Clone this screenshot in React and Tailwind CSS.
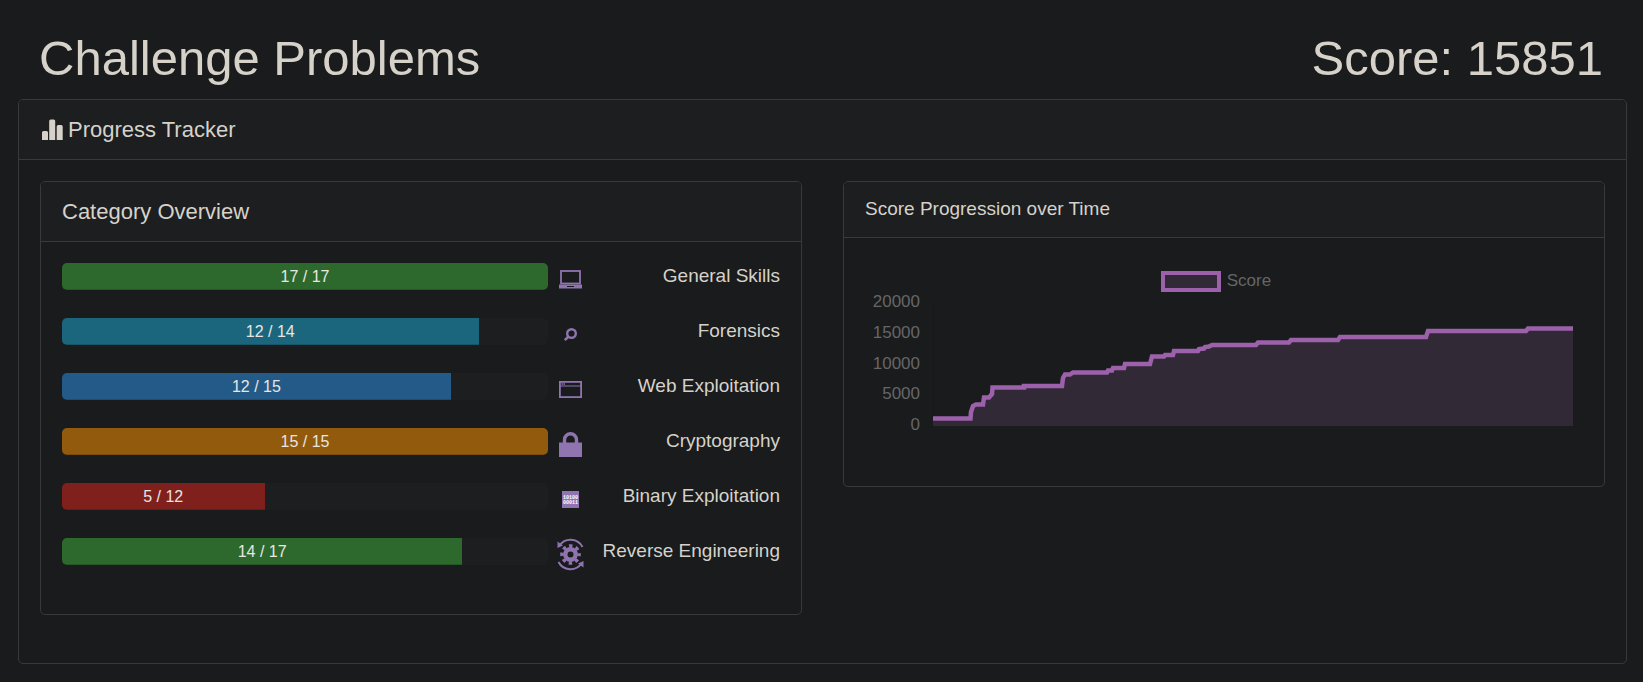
const PURPLE = '#8f74b0';

const icons = {
  laptop: (
    <svg width="23" height="20" viewBox="0 0 23 20" aria-hidden="true">
      <rect x="2" y="1" width="19" height="12.500" fill="none" stroke={PURPLE} strokeWidth="1.8" />
      <path d="M0 14.500h23v4H0z" fill={PURPLE} />
      <path d="M8 16.500h7" stroke="#181a1b" />
    </svg>
  ),
  search: (
    <svg width="13" height="14" viewBox="0 0 13 14" aria-hidden="true">
      <circle cx="7.5" cy="5.5" r="4.3" fill="none" stroke={PURPLE} strokeWidth="2.4" />
      <path d="M4.500 8.500L.8 12.200" stroke={PURPLE} strokeWidth="2.6" />
    </svg>
  ),
  browser: (
    <svg width="23" height="18" viewBox="0 0 23 18" aria-hidden="true">
      <rect x=".9" y=".9" width="21.2" height="15.2" fill="none" stroke={PURPLE} strokeWidth="1.8" />
      <path d="M1 5h21" stroke={PURPLE} />
      <path d="M2.500 3h3.500" stroke={PURPLE} strokeWidth="1.500" strokeDasharray="1.500 .5" />
    </svg>
  ),
  lock: (
    <svg width="23" height="25" viewBox="0 0 23 25" aria-hidden="true">
      <path d="M0 10.500h23V25H0z" fill={PURPLE} />
      <path d="M5.500 12V7.700a6 6 0 0 1 12 0V12" fill="none" stroke={PURPLE} strokeWidth="3.400" />
    </svg>
  ),
  binary: (
    <svg width="17" height="17" viewBox="0 0 17 17" aria-hidden="true">
      <path d="M0 0h17v17H0z" fill={PURPLE} />
      <g fill="#fff" fontFamily="Liberation Mono, monospace" fontWeight="700" fontSize="5">
        <text x="1" y="7.5">10100</text>
        <text x="1" y="13">00011</text>
      </g>
    </svg>
  ),
  gear: (
    <svg width="27" height="33" viewBox="0 0 27 33" aria-hidden="true">
      <g stroke={PURPLE} fill="none">
        <circle cx="13.5" cy="16.5" r="5.2" strokeWidth="4.4" />
        <circle cx="13.5" cy="16.5" r="8.6" strokeWidth="3.4" strokeDasharray="3.4 3.354" strokeDashoffset="1.7" />
        <path d="M2.500 7.500a13.500 13.500 0 0 1 23 1.500" strokeWidth="2" />
        <path d="M24.500 25.500a13.500 13.500 0 0 1-23-1.500" strokeWidth="2" />
      </g>
      <path d="M.5 3.500V10l5.500-2.500zM26.500 29.500V23L21 25.500z" fill={PURPLE} />
    </svg>
  ),
};

const categories = [
  { name: 'General Skills', done: 17, total: 17, color: 'bg-[#2d692d]', icon: icons.laptop },
  { name: 'Forensics', done: 12, total: 14, color: 'bg-[#1b667c]', icon: icons.search },
  { name: 'Web Exploitation', done: 12, total: 15, color: 'bg-[#245a87]', icon: icons.browser },
  { name: 'Cryptography', done: 15, total: 15, color: 'bg-[#915a0d]', icon: icons.lock },
  { name: 'Binary Exploitation', done: 5, total: 12, color: 'bg-[#80201d]', icon: icons.binary },
  { name: 'Reverse Engineering', done: 14, total: 17, color: 'bg-[#2d692d]', icon: icons.gear },
];

const LINE =
  'M0 116.500H37.500L38 110L40 104L43 102.500H50L51 95.500H56L59 92L59.500 85.500H91V84H129L130 76L132 72.500H137L140 70.500H174L175 68.500H179L180 66H191L192 62H217L219 54.500H231L232 53H240L241 49H265L266 47L271 46.500L272 45L276 44.500L279 43H323L325 40.500H356L358 38H405L407 35H493L495 29H593L595 26.500H640';

function Category({ name, done, total, color, icon }) {
  return (
    <li className="mb-7 flex h-[27px] items-center">
      <div
        role="progressbar"
        aria-label={name}
        aria-valuenow={done}
        aria-valuemax={total}
        className="h-[27px] w-[486px] shrink overflow-hidden rounded-[5px] bg-[#1c1e1f]"
      >
        <div
          className={`h-full text-center text-base leading-[27px] text-[#e8e6e3] shadow-[inset_0_-1px_0_rgba(0,0,0,0.15)] ${color}`}
          style={{ width: `${(done / total) * 100}%` }}
        >
          {done} / {total}
        </div>
      </div>
      <div className="mt-1.5 flex w-[45px] shrink-0 items-center justify-center">{icon}</div>
      <span className="flex-1 whitespace-nowrap text-right">{name}</span>
    </li>
  );
}

function Chart() {
  return (
    <div className="pt-8 pb-[51px] text-[17px]">
      <div className="flex h-[22px] items-center justify-center gap-1.5 pr-4">
        <span className="h-[21px] w-[60px] border-4 border-[#9c61aa] bg-[#322937]" />
        <span>Score</span>
      </div>
      <div className="flex">
        <div className="flex h-[143px] w-[55px] flex-col justify-between text-right leading-5">
          <span>20000</span>
          <span>15000</span>
          <span>10000</span>
          <span>5000</span>
          <span>0</span>
        </div>
        <svg
          viewBox="0 0 640 124"
          preserveAspectRatio="none"
          className="mt-2.5 mr-2.5 ml-[13px] h-[124px] min-w-0 flex-1"
          role="img"
          aria-label="Score progression"
        >
          <path d="M.5 0V124" stroke="#161819" />
          <path d={`${LINE}V124H0Z`} fill="#322937" />
          <path d={LINE} fill="none" stroke="#9c61aa" strokeWidth="4.5" strokeLinejoin="miter" strokeMiterlimit="2" />
        </svg>
      </div>
    </div>
  );
}

export default function App() {
  return (
    <main className="min-h-screen bg-[#191b1c] pt-7 pr-4 pb-[18px] pl-[18px] font-['Liberation_Sans',Arial,sans-serif] text-[19px] text-[#d6d2ca]">
      <header className="flex justify-between pr-6 pb-[11px] pl-[21px] text-[49px] leading-[60px]">
        <h1>Challenge Problems</h1>
        <div>Score: 15851</div>
      </header>
      <section className="rounded-[5px] border border-[#38393c]">
        <h2 className="flex h-[60px] items-center gap-1 rounded-t border-b border-[#38393c] bg-[#1d1e20] px-[22px] text-[22px]">
          <svg width="23" height="22" viewBox="0 0 23 22" aria-hidden="true">
            <path
              fill="currentColor"
              d="M1 21v-7.500q0-1.500 1.500-1.500h3q1.500 0 1.500 1.500V21zM8.200 21V2q0-1.500 1.500-1.500h3q1.500 0 1.500 1.500v19zM15.700 21V7.500q0-1.500 1.500-1.500h3q1.500 0 1.500 1.500V21z"
            />
          </svg>
          Progress Tracker
        </h2>
        <div className="grid grid-cols-2 items-start gap-[41px] px-[21px] pt-[21px] pb-12">
          <section className="rounded-[5px] border border-[#38393c]">
            <h3 className="flex h-[60px] items-center rounded-t border-b border-[#38393c] bg-[#1d1e20] px-[21px] text-[22px]">
              Category Overview
            </h3>
            <ul className="px-[21px] pt-[21px] pb-[21px]">
              {categories.map((category) => (
                <Category key={category.name} {...category} />
              ))}
            </ul>
          </section>
          <section className="rounded-[5px] border border-[#38393c]">
            <h3 className="flex h-14 items-center rounded-t border-b border-[#38393c] bg-[#1d1e20] px-[21px]">
              Score Progression over Time
            </h3>
            <div className="px-[21px] text-[#666]">
              <Chart />
            </div>
          </section>
        </div>
      </section>
    </main>
  );
}
